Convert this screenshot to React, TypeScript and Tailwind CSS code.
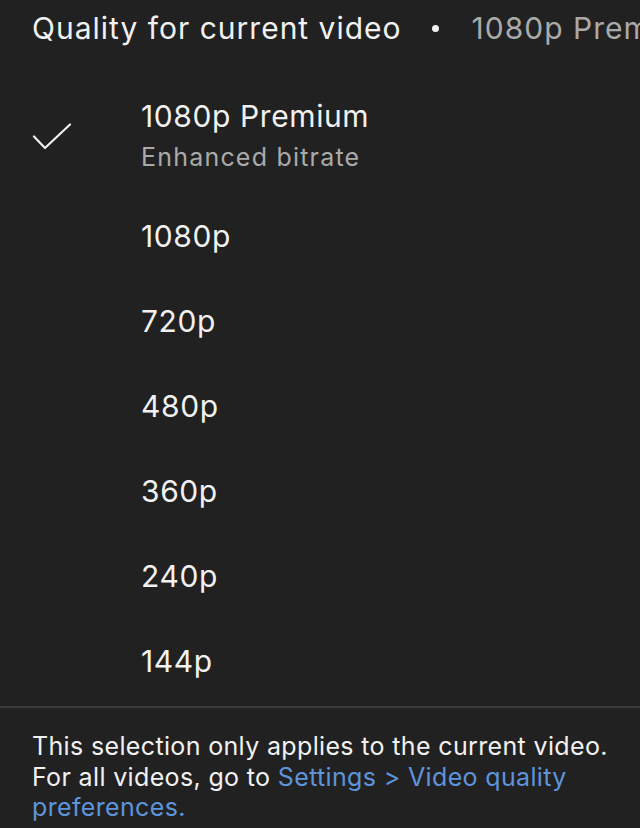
import React, { useState } from 'react';

const qualities = [
  { id: 'premium', label: '1080p Premium', note: 'Enhanced bitrate' },
  { id: '1080', label: '1080p' },
  { id: '720', label: '720p' },
  { id: '480', label: '480p' },
  { id: '360', label: '360p' },
  { id: '240', label: '240p' },
  { id: '144', label: '144p' },
];

function Check() {
  return (
    <svg width="40" height="28" viewBox="0 0 40 28" fill="none">
      <path d="M2 13.5 L13 25 L38 1.5" stroke="#f1f1f1" strokeWidth="2.2" strokeLinecap="round" strokeLinejoin="round" />
    </svg>
  );
}

export default function App() {
  const [selected, setSelected] = useState('premium');
  const current = qualities.find((q) => q.id === selected)!;

  return (
    <div className="w-[640px] h-[828px] bg-[#212121] text-[#f1f1f1] overflow-hidden font-['Inter','Roboto','Liberation_Sans',sans-serif]">
      {/* Header */}
      <div className="h-[56px] flex items-center pl-8 whitespace-nowrap overflow-hidden text-[30px] tracking-[1px]">
        <span>Quality for current video</span>
        <span className="ml-[30px] mr-[33px] w-[7px] h-[7px] shrink-0 rounded-full bg-[#f1f1f1]" />
        <span className="text-[#aaaaaa]">{current.label}</span>
      </div>

      {/* Options */}
      <div className="pt-[24px]">
        {qualities.map((q) => (
          <button
            key={q.id}
            onClick={() => setSelected(q.id)}
            className={`w-full flex items-center text-left ${q.note ? 'h-[114px]' : 'h-[85px]'}`}
          >
            <div className="w-[141px] pl-8 flex items-center">
              {selected === q.id && <Check />}
            </div>
            <div className="flex flex-col">
              <span className="text-[30px] leading-[41px] tracking-[0.6px]">{q.label}</span>
              {q.note && <span className="text-[25px] leading-[41px] tracking-[1.2px] text-[#aaaaaa]">{q.note}</span>}
            </div>
          </button>
        ))}
      </div>

      {/* Footer */}
      <div className="mt-[2px] border-t-2 border-[#3a3a3a] pl-8 pr-6 pt-[23px] text-[25px] leading-[30.5px] tracking-[0.35px]">
        This selection only applies to the current video.
        <br />
        For all videos, go to{' '}
        <span className="text-[#5e94dc]">Settings &gt; Video quality preferences.</span>
      </div>
    </div>
  );
}
